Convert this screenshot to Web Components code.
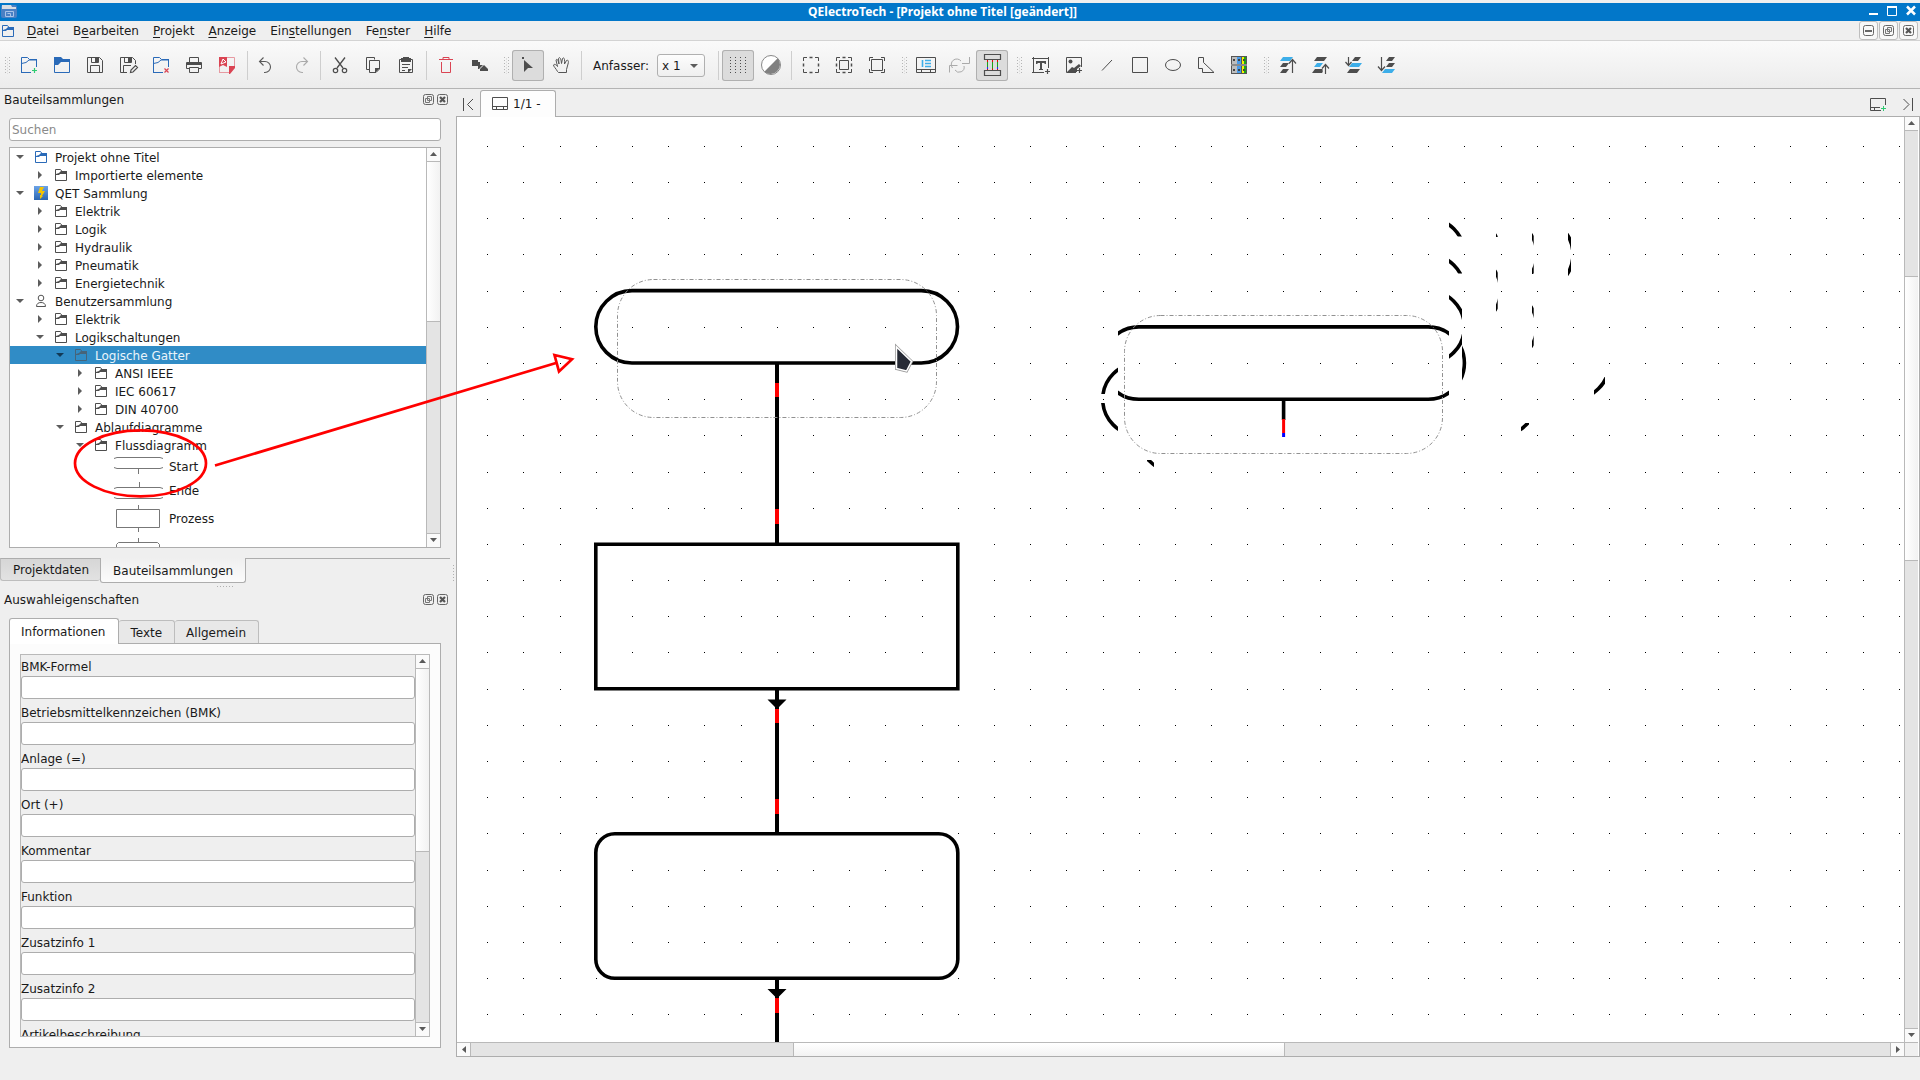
<!DOCTYPE html>
<html lang="de">
<head>
<meta charset="utf-8">
<title>QElectroTech - [Projekt ohne Titel [geändert]]</title>
<style>
  html, body { margin: 0; height: 100%; }
  body {
    --bg: #efefef; --line: #adadad; --soft: #d3d3d3; --ink: #1a1a1a; --icon: #4d4d4d;
    background: var(--bg); color: var(--ink); overflow: hidden;
    font: 12px/18px "DejaVu Sans", sans-serif;
  }
</style>
</head>
<body>
<qet-window></qet-window>

<script>
/* ---------- icons: toolbar icons share a 32 x 31 box ---------- */
const K = '#4d4d4d', B = '#2a6ab8', R = '#da4453', G = '#2ecc71', C = '#3daee9';
const st = (d, c = K, w = 1, extra = '') => `<path d="${d}" fill="none" stroke="${c}" stroke-width="${w}" ${extra}/>`;
const fl = (d, c = K) => `<path d="${d}" fill="${c}"/>`;
const folder = c => st('M8.5 22.5V7.5H14.5L16.5 9.5H23.5', c) + st('M8.5 13.5L13 12.5L16 10H24', c) + st('M23.5 9V17M8 22.5H18', c);
const slab = (x, y, c) => fl(`M${x + 3} ${y}h10l-3 4h-10z`, c);
const slabS = (x, y, c) => fl(`M${x + 3} ${y}h6l-3 4h-6z`, c);
const ICONS = {
  'new': folder(B) + st('M19 20.500H24M21.500 18V23', G, 1.200),
  'open': fl('M8 7h7l2 2h7v3H15l-3 3H8z', B) + st('M8.5 8V22.5H23.5V10', B),
  'save': st('M8.5 7.5H20.5L23.5 10.5V22.5H8.5Z') + st('M12.5 7.5V12.5H19.5V7.5M11.5 22.5V15.5H20.5V22.5') + fl('M16 8h3v4h-3z'),
  'saveas': st('M15 22.5H8.5V7.5H20.5L23.5 10.5V14') + st('M12.5 7.5V12.5H19.5V7.5M11.5 22.5V15.5H19') + fl('M16 8h3v4h-3z') + st('M18.5 22.5L19 20L23.5 15.5L25.5 17.5L21 22Z', K, 1.2),
  'close': folder(B) + st('M19.5 18.500L23.500 22.500M23.500 18.500L19.500 22.500', R, 1.2),
  'print': st('M11.500 12V7.500H20.500V12') + st('M11 18.500H8.500V12.500H23.500V18.500H21') + fl('M9 13h14v2H9z') + st('M11.500 17.500H20.500V22.500H11.500Z'),
  'pdf': st('M8.500 22.500V7.500H23.500V18M8 22.500H18', '#e79aa2') + fl('M8 7h8v10l-4-2-4 2z', R) + st('M10 14l2-5 3 3z', '#fff') + fl('M18 16h6v2l-5 6h-1z', R),
  'undo': st('M12.500 7.500L8.500 11.500L12.500 15.500M8.500 11.500H14A5.500 5.500 0 0 1 14 22.500H13', '#5a5a5a', 1.1),
  'redo': st('M19.500 7.500L23.500 11.500L19.500 15.500M23.500 11.500H18A5.500 5.500 0 0 0 18 22.500H19', '#aaa', 1.1),
  'cut': st('M11 7.500L19 18M21 7.500L13 18', K, 1.3) + `<circle cx="11.500" cy="20.500" r="2.200" fill="none" stroke="${K}" stroke-width="1.200"/><circle cx="20.500" cy="20.500" r="2.200" fill="none" stroke="${K}" stroke-width="1.200"/>`,
  'copy': st('M12 19.500H9.500V7.500H17.500V9.500') + st('M12.500 10.500H22.500V19L19 22.500H12.500Z') + fl('M18 18h5l-5 5z'),
  'paste': st('M9.500 9.500H22.500V22.500H9.500Z') + fl('M11 8h2V7h6v1h2v4H11z') + st('M12 14.500H20M12 17.500H18M12 20.500H15') + fl('M18 19h4l-4 4z'),
  'trash': st('M9 9.500H23M13 9.500V7.500H19V9.500', R) + st('M11.500 12V22.500H20.500V12', R),
  'rotate': fl('M9 10h6v6H9z') + fl('M15 12h2v3h3l-4 4h-1z') + fl('M17 19l4-4 4 4v2h-8z'),
  'pointer': fl('M12 10l9 8h-5l-4 4z') + fl('M10 7h2v2h-2z'),
  'hand': st('M12.500 21.500C11 18.500 8.500 16.500 8.500 15C9.500 13.500 11.500 15 12.500 16.500L11 10C12 8.500 13 9.500 14 14L13.500 8.500C14.500 6.500 16 8 16.500 13.500L17.500 8.500C19 7 20 8.500 19.500 14L21.500 10.500C23 9.500 24 11 23 14L21.500 19.500V22.500H13.500Z', '#555', 1),
  'grid': [8.5, 13.5, 18.5, 23.5].map(x => st(`M${x} 7V23`, K, 1, 'stroke-dasharray="1 2"')).join(''),
  'contrast': `<circle cx="16" cy="15" r="9.500" fill="#fff" stroke="#888"/>` + fl('M22.700 8.300A9.500 9.500 0 0 1 9.300 21.700Z', '#808080'),
  'selall': st('M8.500 11V7.500H12M20 7.500H23.500V11M23.500 19V22.500H20M12 22.500H8.500V19') + st('M14.500 7.500H17.500M14.500 22.500H17.500M8.500 13.500V16.500M23.500 13.500V16.500', K, 1.500),
  'selinv': st('M8.500 11V7.500H12M20 7.500H23.500V11M23.500 19V22.500H20M12 22.500H8.500V19') + st('M14.500 7.500H17.500M14.500 22.500H17.500M8.500 13.500V16.500M23.500 13.500V16.500', K, 1.500) + st('M11.500 10.500H20.500V19.500H11.500Z'),
  'selnone': st('M8.500 11V7.500H12M20 7.500H23.500V11M23.500 19V22.500H20M12 22.500H8.500V19') + st('M10.500 9.500H21.500V20.500H10.500Z'),
  'folio': st('M6.500 7.500H25.500V22.500H6.500ZM6 19.500H26M11.500 19V23M20.500 19V23') + st('M12.500 10V17M15 10.500H21M15 13.500H21M15 16.500H21', C, 1.600),
  'conn': st('M6.500 22.500V15.500H14.500M9.500 18A5 5 0 0 1 18 11M12 20A5 5 0 0 0 21 16M19 13.500H26.500V7', '#aaa'),
  'autocon': st('M8.500 4.500H24.500V9.500H8.500ZM8.500 20.500H24.500V25.500H8.500Z', K, 1.200) + [11.5, 16.5, 21.500].map(x => st(`M${x} 10V20`, '#19a319') + st(`M${x} 10V12M${x} 18.500V20`, '#e00')).join('') + st('M11.500 17V19M21.500 17V19', '#22f'),
  'text': st('M7 8.500H24M8.500 7V23M23.500 7V18M7 22.500H19') + fl('M11 11h10v3h-1l-1-1h-2v6h1v1h-4v-1h1v-6h-2l-1 1h-1z') + st('M20 21.500H25M22.500 19V24', K, 1.200),
  'image': st('M18 22.500H8.500V7.500H23.500V17') + `<circle cx="12.500" cy="11.500" r="2" fill="${K}"/>` + fl('M9 22L14 17l2 1 5-4 2 2-4 3v3z') + st('M19 20.500H24M21.500 18V23', K, 1.200),
  'line': st('M11 20.500L21 10'),
  'rect': st('M8.500 7.500H23.500V22.500H8.500Z'),
  'ellipse': `<ellipse cx="16" cy="15" rx="7.500" ry="5.500" fill="none" stroke="${K}"/>`,
  'poly': st('M8.500 7.500H13.500V12.500L24 22.500H12.500V18.500H8.500Z'),
  'terminal': fl('M8 6h16v18H8z', '#555') + fl('M9 7h5v16H9z', '#bdbdbd') + fl('M14 7h4v16h-4z', '#4a9be8') + fl('M19 7h2v16h-2z', '#f4f400') + fl('M21 7h2v16h-2z', '#18a818') + fl('M8 14h16v2H8z', '#8b8b8b') + fl('M10 9h2v2h-2zM15 9h2v2h-2zM20 9h2v2h-2zM10 19h2v2h-2zM15 19h2v2h-2zM20 19h2v2h-2z', '#444'),
  'front': slab(8, 7, C) + slabS(8, 13, K) + slabS(8, 19, K) + st('M20.500 23V10M17 13.500L20.500 9.500L24 13.500', K, 1.200),
  'raise': slab(9, 7, K) + slabS(9, 13, C) + slab(7, 19, K) + fl('M17 14h9v6h-3v4h-5z', '#f3f3f3') + st('M20.500 24V15M17 18.500L20.500 14.500L24 18.500', K, 1.200),
  'lower': slabS(14, 7, K) + slab(11, 13, C) + slab(9, 19, K) + st('M10.500 7V15M7.500 12L10.500 15.500L13.500 12', K, 1.200),
  'back': slabS(15, 7, K) + slabS(15, 13, K) + slab(11, 19, C) + st('M10.500 7V20M7 16.500L10.500 20.500L14 16.500', K, 1.200)
};
/* small icons for tree rows, tabs and docks: 14 x 14 */
const smallFolder = c => st('M1.500 12.500V1.500H6.500L8 3.500H12.500V12.500Z', c) + fl('M2 6l3-1 2-2h6v3H6L5 7H2z', c);
const SMALL = {
  folder: smallFolder(K),
  bluefolder: smallFolder(B),
  dimfolder: smallFolder('#46647a'),
  qet: '<defs><linearGradient id="q" x1="0" y1="0" x2="0" y2="1"><stop offset="0" stop-color="#6ba3e8"/><stop offset="1" stop-color="#2c66b0"/></linearGradient></defs><rect width="14" height="14" fill="url(#q)"/>' + fl('M6 1h4L8 5h3L8 10h1l-3 3V9h1L7 7H4z', '#f5c400'),
  user: `<circle cx="7" cy="4" r="2.800" fill="none" stroke="#555"/>` + st('M2.500 12.500C2.500 9.500 4.500 8.500 7 8.500S11.500 9.500 11.500 12.500Z', '#555')
};
/* previews of library elements, as tall as their row */
const SHAPES = {
  start: st('M0 4.500L3 3.500H46L49 4.500M0 13.500L3 14.500H46L49 13.500M24.500 15V20', '#777'),
  end: st('M0 9.500L3 8.500H46L49 9.500M0 18.500L3 19.500H46L49 18.500M25.500 3V9', '#777'),
  process: st('M2.500 6.500H45.500V24.500H2.500ZM24.500 2V6M24.500 25V29', '#777'),
  alternate: st('M2.500 20V10.500L4.500 8.500H43.500L45.500 10.500V20M24.500 4V8', '#777')
};

const define = (name, html, setup) => {
  const t = document.createElement('template');
  customElements.define(name, class extends HTMLElement {
    connectedCallback() {
      if (this.shadowRoot) return;
      t.innerHTML = typeof html === 'function' ? html(this) : html;
      this.attachShadow({ mode: 'open' }).append(t.content.cloneNode(true));
      setup && setup(this, this.shadowRoot);
    }
  });
};

/* ---------- title bar ---------- */
define('title-bar', `
<style>
  :host { display: grid; grid-template-columns: auto 1fr auto; align-items: center; height: 18px; margin-top: 3px;
    background: #0277c9; color: #fff; font: bold 12px/18px "Noto Sans", sans-serif; }
  svg { display: block; }
  span { text-align: center; }
  .win { display: flex; gap: 5px; padding-right: 1px; }
  button { all: unset; width: 14px; height: 18px; }
</style>
<svg width="18" height="18"><rect x="1" y="2" width="16" height="13" rx="2" fill="#4a80c4"/><path d="M2 2h9l1 2h4v2H2z" fill="#d8dde3"/><path d="M5.500 8.500h8v5h-8zM7.500 10.500h3v3" fill="none" stroke="#a9c4e8"/></svg>
<span><slot></slot></span>
<div class="win">
  <button aria-label="Minimieren"><svg width="14" height="18"><path d="M2 10h9v2H2z" fill="#fff"/></svg></button>
  <button aria-label="Maximieren"><svg width="14" height="18"><path d="M1.500 4v8.500h9V4" fill="none" stroke="#fff"/><path d="M1 3h10v2H1z" fill="#fff"/></svg></button>
  <button aria-label="Schließen"><svg width="14" height="18"><path d="M2 3.500l8 8M10 3.500l-8 8" stroke="#fff" stroke-width="2.500"/></svg></button>
</div>`);

const frameIcon = k => `<svg width="11" height="12"><rect x=".5" y=".5" width="10" height="10" rx="2" fill="none" stroke="#666"/>` + ({
  min: '<path d="M2 5h7v2H2z" fill="#666"/>',
  float: '<path d="M4.500 2.500h4v4h-4zM2.500 4.500h4v4h-4z" fill="#efefef" stroke="#777"/>',
  close: '<path d="M3 3l5 5M8 3l-5 5" stroke="#555" stroke-width="2.200"/>'
})[k] + '</svg>';

/* ---------- menu bar ---------- */
define('menu-bar', `
<style>
  :host { display: flex; align-items: center; height: 19px; border-bottom: 1px solid var(--soft); background: var(--bg); padding: 0 2px 0 1px; }
  nav { display: flex; flex: 1; margin-left: 5px; }
  .doc { display: block; }
  .mdi { display: flex; gap: 1px; }
  .mdi button { all: unset; box-sizing: border-box; width: 19px; height: 19px; border: 1px solid #bdbdbd; border-radius: 3px; background: #f8f8f8; display: grid; place-items: center; }
  .mdi svg { display: block; }
</style>
<svg class="doc" width="14" height="14">${smallFolder(B)}</svg>
<nav><slot></slot></nav>
<div class="mdi"><button aria-label="Minimieren">${frameIcon('min')}</button><button aria-label="Wiederherstellen">${frameIcon('float')}</button><button aria-label="Schließen">${frameIcon('close')}</button></div>`);

define('menu-item', el => {
  const [a, k, b] = el.getAttribute('label').split('_');
  return `<style>:host{display:block}button{all:unset;padding:0 7px;line-height:18px}u{text-underline-offset:2px}</style><button>${a}<u>${k}</u>${b}</button>`;
});

/* ---------- toolbar ---------- */
define('tool-bar', `
<style>:host { display: flex; align-items: center; gap: 1px; height: 45px; padding: 2px 0 0 5px; border-bottom: 1px solid #b4b4b4; background: linear-gradient(#fafafa, #ececec); }</style><slot></slot>`);
define('tool-button', el => `
<style>
  :host { display: block; }
  button { all: unset; display: block; position: relative; width: 32px; height: 31px; }
  :host([checked]) button { background: #dcdcdc; border-radius: 3px; box-shadow: inset 0 0 0 1px #b0b0b0; }
  svg { display: block; }
</style><button aria-label="${el.getAttribute('icon')}"><svg width="32" height="31">${ICONS[el.getAttribute('icon')]}</svg></button>`);
define('tool-grip', `
<style>:host { display: block; width: 7px; height: 17px; margin-left: 8px; } :host(:first-child) { margin-left: 0; } svg { display: block; }</style>
<svg width="5" height="17"><path d="M.5 0V17M4.500 0V17" stroke="#b5b5b5" stroke-dasharray="1 2"/><path d="M2.500 1.500V17" stroke="#cfcfcf" stroke-dasharray="1 2"/></svg>`);
define('tool-separator', `<style>:host { display: block; width: 1px; height: 29px; margin: 0 2px 0 3px; background: #cecece; }</style>`);
define('handle-select', `
<style>
  :host { display: flex; align-items: center; margin: 0 9px 0 8px; }
  label { margin-right: 8px; }
  .box { display: grid; align-items: center; }
  select { grid-area: 1/1; appearance: none; width: 48px; height: 23px; margin: 0; padding: 0 4px; border: 1px solid #b0b0b0; border-radius: 3px; background: linear-gradient(#fdfdfd, #efefef); color: inherit; font: inherit; }
  svg { grid-area: 1/1; justify-self: end; margin-right: 6px; pointer-events: none; }
</style>
<label for="s">Anfasser:</label><span class="box"><select id="s"><option>x 1</option><option>x 2</option><option>x 3</option></select><svg width="10" height="6"><path d="M1 1h8L5 5z" fill="#5c5c5c"/></svg></span>`);

/* ---------- scroll bar ---------- */
define('scroll-bar', el => {
  const [a, b, c] = el.getAttribute('parts').split(' ');
  const h = el.hasAttribute('horizontal');
  const arrow = first => `<svg width="13" height="13"><path d="${h ? (first ? 'M9 3V10L5 6.500z' : 'M5 3V10L9 6.500z') : (first ? 'M3 8H10L6.500 4z' : 'M3 4H10L6.500 8z')}" fill="#5a5a5a"/></svg>`;
  return `
<style>
  :host { display: flex; flex-direction: ${h ? 'row' : 'column'}; background: #e4e4e4; box-sizing: border-box;
    ${h ? 'height: 14px; border-top' : 'width: 14px; border-left'}: 1px solid #b9b9b9; }
  button { all: unset; background: #fafafa; flex: none; width: 13px; height: 13px; }
  .b0 { border-${h ? 'right' : 'bottom'}: 1px solid #b9b9b9; } .b1 { border-${h ? 'left' : 'top'}: 1px solid #b9b9b9; }
  svg { display: block; }
  i { flex: 1 1 0; }
  .thumb { background: linear-gradient(${h ? '' : 'to right,'} #fff, #f2f2f2); border: 0 solid #b9b9b9; border-${h ? 'right' : 'bottom'}-width: 1px; }
  .mid { border-${h ? 'left' : 'top'}-width: 1px; }
</style><button class="b0" aria-label="zurück">${arrow(true)}</button><i style="flex-grow:${a}"></i><i class="thumb ${+a ? 'mid' : ''}" style="flex-grow:${b}"></i><i style="flex-grow:${c}"></i><button class="b1" aria-label="vor">${arrow(false)}</button>`;
});

/* ---------- docks ---------- */
define('dock-panel', el => `
<style>
  :host { display: flex; flex-direction: column; min-height: 0; }
  header { display: flex; align-items: center; height: 22px; padding: 0 2px 0 4px; gap: 3px; flex: none; }
  h2 { flex: 1; margin: 0; font: inherit; }
  button { all: unset; width: 11px; height: 12px; } svg { display: block; }
  .body { flex: 1; min-height: 0; display: flex; flex-direction: column; padding: 7px 9px 0; }
</style>
<header><h2>${el.getAttribute('label')}</h2><button aria-label="Lösen">${frameIcon('float')}</button><button aria-label="Schließen">${frameIcon('close')}</button></header>
<div class="body"><slot></slot></div><slot name="foot"></slot>`);

define('search-box', `
<style>:host{display:block} input{box-sizing:border-box;display:block;width:100%;height:23px;margin:0;padding:0 2px;border:1px solid var(--line);border-radius:3px;background:#fff;font:inherit;color:inherit;outline:0} input::placeholder{color:#8a8a8a;opacity:1}</style>
<input type="text" placeholder="Suchen" aria-label="Suchen">`);

define('tree-view', `
<style>
  :host { display: flex; flex: 1; min-height: 0; margin-top: 6px; border: 1px solid var(--line); background: #fff; }
  .rows { flex: 1; overflow: hidden; }
</style><div class="rows" role="tree"><slot></slot></div><scroll-bar parts="0 159 212"></scroll-bar>`);

define('tree-row', el => {
  const open = el.getAttribute('state') === 'open', item = el.getAttribute('shape'), h = +(el.getAttribute('rowheight') || 18);
  const dark = el.hasAttribute('selected') ? '#123a56' : '#5c5c5c';
  const icon = item ? `<svg width="50" height="${h}">${SHAPES[item]}</svg>` : `<svg width="14" height="14">${SMALL[el.getAttribute('icon') || 'folder']}</svg>`;
  return `
<style>
  :host { display: flex; align-items: center; height: ${h}px; padding-left: ${+el.getAttribute('level') * 20}px; white-space: nowrap; }
  :host([selected]) { background: #308cc6; color: #eaf4fb; }
  svg { display: block; flex: none; }
  .arrow { width: 20px; height: 18px; margin-right: 4px; }
  span { line-height: 16px; padding-top: ${item ? 0 : 2}px; margin-left: ${item ? 5 : 7}px; }
</style>
<svg class="arrow">${item ? '' : `<path d="${open ? 'M6 7h8l-4 4z' : 'M8 5v8l4-4z'}" fill="${dark}"/>`}</svg>${icon}<span><slot></slot></span>`;
});

define('dock-tabs', `
<style>
  :host { display: flex; height: 25px; margin-top: 10px; align-items: flex-start; flex: none; box-shadow: inset 0 1px var(--line); }
  button { all: unset; box-sizing: border-box; height: 23px; padding: 0 11px 0 12px; line-height: 23px; border: 1px solid #bdbdbd; border-radius: 0 0 3px 3px; background: linear-gradient(#d6d6d6, #e2e2e2); border-top-color: var(--line); border-right: 0; }
  button.on { height: 25px; line-height: 26px; padding: 0 12px; background: linear-gradient(#efefef, #fbfbfb); border: 1px solid var(--line); border-top: 0; }
</style><button>Projektdaten</button><button class="on">Bauteilsammlungen</button>`);

define('form-field', el => `
<style>
  :host { display: block; margin-bottom: 5px; }
  label { display: block; line-height: 18px; }
  input { box-sizing: border-box; display: block; width: 100%; height: 23px; margin: 0; padding: 0 3px; border: 1px solid var(--line); border-radius: 3px; background: #fff; font: inherit; outline: 0; }
</style><label for="f">${el.getAttribute('label')}</label><input id="f" type="text">`);

define('property-tabs', `
<style>
  :host { display: flex; flex-direction: column; flex: 1; min-height: 0; padding-bottom: 9px; }
  nav { display: flex; align-items: flex-end; height: 25px; flex: none; }
  button { all: unset; box-sizing: border-box; height: 23px; padding: 0 12px 0 11px; line-height: 24px; border: 1px solid #bdbdbd; border-width: 1px 1px 0 0; border-radius: 3px 3px 0 0; background: #e8e8e8; }
  button.on { height: 26px; line-height: 26px; margin-bottom: -1px; padding: 0 13px 0 11px; background: #fff; border: 1px solid var(--line); border-bottom: 0; position: relative; }
  .pane { flex: 1; min-height: 0; display: flex; border: 1px solid var(--line); background: #fcfcfc; padding: 10px; }
  .scroll { flex: 1; display: flex; min-width: 0; border: 1px solid #b9b9b9; background: var(--bg); }
  .form { flex: 1; overflow: hidden; padding-top: 3px; }
</style>
<nav><button class="on">Informationen</button><button>Texte</button><button>Allgemein</button></nav>
<div class="pane"><div class="scroll"><div class="form"><slot></slot></div><scroll-bar parts="0 183 171"></scroll-bar></div></div>`);

/* ---------- diagram ---------- */
const pill = (x, y) => `M${x + 36.2} ${y}H${x + 325.500}A36.2 36.2 0 0 1 ${x + 325.500} ${y + 72.4}H${x + 36.2}A36.2 36.2 0 0 1 ${x + 36.2} ${y}Z`;
const dots = () => {
  let d = '';
  for (let j = 0; j < 25; j++) for (let i = 0; i < 40; i++)
    d += `M${Math.floor(487.8 + 36.19 * i)} ${Math.floor(146.3 + 36.19 * j)}h1v1h-1z`;
  return d;
};
/* leftovers of dragged outlines: pill origin, then the visible window */
const TRAILS = [
  [1102.7, 326.9, 1118, 320, 331, 90], [1102.7, 363.1, 1098, 360, 20, 34], [1102.7, 363.1, 1098, 403, 20, 40],
  [1139, 399.3, 1147, 460, 7, 7],
  [1102.7, 218.2, 1449, 216, 13, 20.5], [1102.7, 254.4, 1449, 255, 13, 18.5], [1102.7, 290.6, 1449, 290, 13, 80], [1102.7, 326.8, 1462, 340, 8, 44],
  [1138.9, 218.2, 1496, 233, 1.7, 4], [1138.9, 254.4, 1496, 265, 1.7, 50],
  [1175.1, 218.2, 1532, 233, 1.7, 41], [1175.1, 290.6, 1532, 300, 1.7, 50],
  [1211.3, 218.2, 1568, 233, 3, 44], [1247.500, 326.8, 1594, 377, 11, 20], [1175.1, 363, 1521, 423, 8, 9]
];
define('diagram-view', () => `
<style>
  :host { display: grid; grid-template: 1fr auto / 1fr auto; flex: 1; min-height: 0; border: 1px solid var(--line); border-top: 0; padding-right: 1px; background: #fff; }
  .canvas { width: 100%; height: 100%; display: block; min-height: 0; overflow: hidden; }
  .cell { min-width: 0; min-height: 0; overflow: hidden; }
  .corner { background: #efefef; border: 1px solid #b9b9b9; border-width: 1px 0 0 1px; }
</style>
<div class="cell"><svg class="canvas" role="img" aria-label="Folie 1/1"><defs>${TRAILS.map((t, i) => `<clipPath id="c${i}"><rect x="${t[2]}" y="${t[3]}" width="${t[4]}" height="${t[5]}"/></clipPath>`).join('')}</defs>
<g transform="translate(-457 -117)" fill="none">
  <path d="${dots()}" fill="#000" shape-rendering="crispEdges"/>
  <g stroke="#000" stroke-width="3.600">
    <path d="${pill(595.8, 290.6)}"/>
    <path d="M595.800 544.200h362v144.600h-362z"/>
    <rect x="595.800" y="833.700" width="362" height="144.600" rx="19"/>
    <path d="M777 363V544M777 689V833M777 978V1050" stroke-width="4"/>
    <path d="M1283.600 399V420"/>
    ${TRAILS.map((t, i) => `<path clip-path="url(#c${i})" d="${pill(t[0], t[1])}"/>`).join('')}
  </g>
  <path d="M777 383v14M777 509v15M777 709v14M777 799v15M777 998v15" stroke="#f00" stroke-width="4"/>
  <path d="M1283.600 419v14" stroke="#f00" stroke-width="3"/>
  <path d="M1283.600 433v4" stroke="#00f" stroke-width="3"/>
  <path d="M767.500 699.500h19l-9.500 9.500zM767.500 989h19l-9.500 9.500z" fill="#000"/>
  <g stroke="#919191" stroke-dasharray="4 2 1 2"><rect x="617.500" y="279.500" width="319" height="138" rx="36"/><rect x="1124.500" y="315.500" width="318" height="138" rx="36"/></g>
  <path d="M896.500 347L911.500 361.500L906.500 371L896.500 368.500Z" fill="#272b36" stroke="#999" stroke-width="3"/>
  <path d="M896.500 347L911.500 361.500L906.500 371L896.500 368.500Z" fill="#272b36" stroke="#fff" stroke-width="1.500"/>
</g></svg></div>
<scroll-bar parts="145 283 468"></scroll-bar>
<scroll-bar horizontal parts="322 491 605"></scroll-bar><div class="corner"></div>`);

define('diagram-tabs', `
<style>
  :host { display: flex; align-items: flex-end; height: 28px; flex: none; box-shadow: inset 0 -1px var(--line); }
  button { all: unset; box-sizing: border-box; display: flex; align-items: center; }
  svg { display: block; }
  .nav { height: 22px; width: 24px; align-self: center; justify-content: center; padding-top: 3px; }
  .tab { height: 27px; padding: 0 15px 0 11px; gap: 5px; border: 1px solid var(--line); border-bottom: 0; border-radius: 3px 3px 0 0; background: #fdfdfd; }
  .tab svg { margin-bottom: 1px; } .fill { flex: 1; }
  .add { margin-right: 6px; }
</style>
<button class="nav" aria-label="Erste Folie"><svg width="11" height="13"><path d="M.5 0V13M10 1L4.500 6.500L10 12" fill="none" stroke="#4d4d4d"/></svg></button>
<button class="tab"><svg width="16" height="13"><path d="M.5.5H15.500V12.500H.5ZM0 9.500H16M4.500 9V13M11.500 9V13" fill="none" stroke="#4d4d4d"/></svg>1/1 -</button>
<span class="fill"></span>
<button class="nav add" aria-label="Neue Folie"><svg width="16" height="14"><path d="M15.500 7V.5H.5V12.500H11M0 9.500H10M4.500 9V13" fill="none" stroke="#4d4d4d"/><path d="M11 10.500h5M13.500 8v5" stroke="#2ecc71"/></svg></button>
<button class="nav" aria-label="Letzte Folie"><svg width="11" height="13"><path d="M9.500 0V13M.5 1L6 6.500L.5 12" fill="none" stroke="#4d4d4d"/></svg></button>`);

/* hand drawn pointer from the library to the sheet */
define('red-note', `
<style>:host { position: absolute; left: 0; top: 0; pointer-events: none; } svg { display: block; }</style>
<svg width="600" height="520" fill="none" stroke="#f00" stroke-width="2.700"><ellipse cx="140.500" cy="463.300" rx="65.500" ry="33"/><path d="M215 465.500L556 363M554.500 355L572 359.300L559 371.500Z"/></svg>`);

/* ---------- window ---------- */
const tools = ': new open save saveas close print pdf | undo redo | cut copy paste | trash rotate : pointer* hand | @ | grid* contrast | selall selinv selnone : folio conn autocon* : text image line rect ellipse poly terminal : front raise lower back'
  .split(' ').map(t => t === '|' ? '<tool-separator></tool-separator>' : t === ':' ? '<tool-grip></tool-grip>' : t === '@' ? '<handle-select></handle-select>'
    : `<tool-button icon="${t.replace('*', '')}" ${t.endsWith('*') ? 'checked' : ''}></tool-button>`).join('');
const row = (level, state, text, extra = '') => `<tree-row role="treeitem" level="${level}" state="${state}" ${extra}>${text}</tree-row>`;
const rows = [
  row(0, 'open', 'Projekt ohne Titel', 'icon="bluefolder"'), row(1, '', 'Importierte elemente'),
  row(0, 'open', 'QET Sammlung', 'icon="qet"'), row(1, '', 'Elektrik'), row(1, '', 'Logik'), row(1, '', 'Hydraulik'), row(1, '', 'Pneumatik'), row(1, '', 'Energietechnik'),
  row(0, 'open', 'Benutzersammlung', 'icon="user"'), row(1, '', 'Elektrik'), row(1, 'open', 'Logikschaltungen'),
  row(2, 'open', 'Logische Gatter', 'icon="dimfolder" selected'), row(3, '', 'ANSI IEEE'), row(3, '', 'IEC 60617'), row(3, '', 'DIN 40700'),
  row(2, 'open', 'Ablaufdiagramme'), row(3, 'open', 'Flussdiagramm'),
  row(4, '', 'Start', 'shape="start" rowheight="25"'), row(4, '', 'Ende', 'shape="end" rowheight="24"'),
  row(4, '', 'Prozess', 'shape="process" rowheight="31"'), row(4, '', 'Alternativprozess', 'shape="alternate" rowheight="37"')
].join('');
const menus = ['_D_atei', 'B_e_arbeiten', '_P_rojekt', '_A_nzeige', 'Ein_s_tellungen', 'Fe_n_ster', '_H_ilfe'].map(m => `<menu-item label="${m}"></menu-item>`).join('');
const fields = ['BMK-Formel', 'Betriebsmittelkennzeichen (BMK)', 'Anlage (=)', 'Ort (+)', 'Kommentar', 'Funktion', 'Zusatzinfo 1', 'Zusatzinfo 2', 'Artikelbeschreibung'].map(f => `<form-field label="${f}"></form-field>`).join('');

define('qet-window', `
<style>
  :host { display: flex; flex-direction: column; height: 100vh; position: relative; }
  main { flex: 1; min-height: 0; display: flex; }
  aside { width: 450px; flex: none; display: flex; flex-direction: column; }
  .lib { flex: 494 1 0; } .props { flex: 468 1 0; }
  .split { flex: none; display: grid; place-items: center; }
  .h { height: 6px; } .v { width: 6px; }
  .split::before { content: ""; background: repeating-linear-gradient(var(--dir), #b0b0b0 0 1px, transparent 1px 3px); }
  .h::before { --dir: to right; width: 16px; height: 1px; } .v::before { --dir: to bottom; width: 1px; height: 16px; }
  section { flex: 1; min-width: 0; display: flex; flex-direction: column; }
  footer { height: 23px; flex: none; }
</style>
<title-bar>QElectroTech - [Projekt ohne Titel [geändert]]</title-bar>
<menu-bar>${menus}</menu-bar>
<tool-bar>${tools}</tool-bar>
<main>
  <aside>
    <dock-panel class="lib" label="Bauteilsammlungen"><search-box></search-box><tree-view>${rows}</tree-view><dock-tabs slot="foot"></dock-tabs></dock-panel>
    <div class="split h"></div>
    <dock-panel class="props" label="Auswahleigenschaften"><property-tabs>${fields}</property-tabs></dock-panel>
  </aside>
  <div class="split v"></div>
  <section><diagram-tabs></diagram-tabs><diagram-view></diagram-view></section>
</main>
<footer></footer>
<red-note></red-note>`);
</script>
</body>
</html>
